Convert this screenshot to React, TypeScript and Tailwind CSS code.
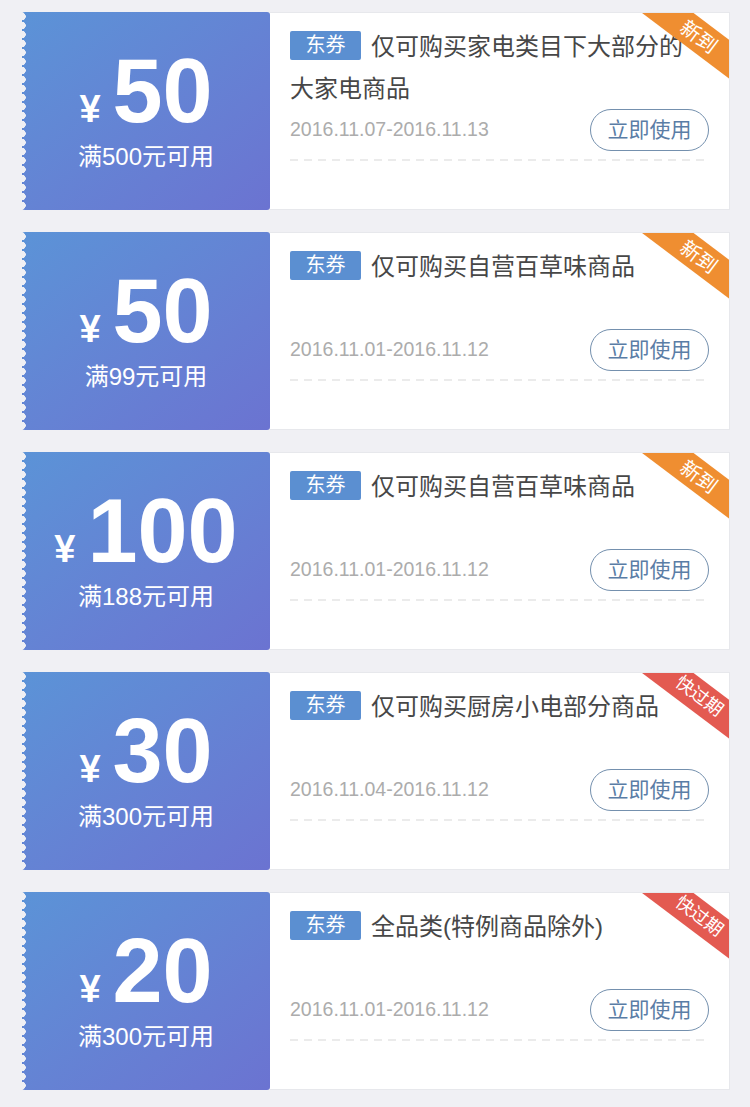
import React from "react"

type Coupon = {
  amount: string
  limit: string
  title: string
  date: string
  badge: "new" | "expiring"
}

const coupons: Coupon[] = [
  { amount: "50", limit: "满500元可用", title: "仅可购买家电类目下大部分的大家电商品", date: "2016.11.07-2016.11.13", badge: "new" },
  { amount: "50", limit: "满99元可用", title: "仅可购买自营百草味商品", date: "2016.11.01-2016.11.12", badge: "new" },
  { amount: "100", limit: "满188元可用", title: "仅可购买自营百草味商品", date: "2016.11.01-2016.11.12", badge: "new" },
  { amount: "30", limit: "满300元可用", title: "仅可购买厨房小电部分商品", date: "2016.11.04-2016.11.12", badge: "expiring" },
  { amount: "20", limit: "满300元可用", title: "全品类(特例商品除外)", date: "2016.11.01-2016.11.12", badge: "expiring" },
]

function CouponCard({ coupon }: { coupon: Coupon }) {
  const isNew = coupon.badge === "new"

  return (
    <div className="flex h-[198px] w-full">
      {/* left: amount */}
      <div className="relative flex w-[248px] shrink-0 flex-col items-center justify-center rounded-[3px] bg-gradient-to-br from-[#5b93d7] to-[#6b73d1] pb-[4px] text-white">
        <div className="absolute left-0 top-0 h-full w-[4px] bg-[radial-gradient(circle_at_0_50%,#f0f0f4_3.5px,transparent_4px)] bg-[length:4px_9px]" />
        <div className="flex items-baseline">
          <span className="mr-[12px] text-[38px] font-bold leading-none">¥</span>
          <span className="text-[90px] font-bold leading-none">{coupon.amount}</span>
        </div>
        <div className="mt-[6px] text-[24px] leading-[30px]">{coupon.limit}</div>
      </div>

      {/* right: details */}
      <div className="relative flex-1 overflow-hidden border border-l-0 border-[#e7e8ec] bg-white pl-[20px] pr-[20px] pt-[13px]">
        <div className={`absolute right-[-45px] top-[8px] flex h-[31px] w-[150px] rotate-[37deg] items-center justify-center text-white ${isNew ? "bg-[#ef8e31]" : "bg-[#e35a51]"}`}>
          <span className={isNew ? "text-[20px]" : "text-[18px]"}>{isNew ? "新到" : "快过期"}</span>
        </div>

        <div className="h-[84px] pr-[24px] text-[24px] leading-[42px] text-[#474747]">
          <span className="relative top-[-3px] mr-[10px] inline-block h-[29px] w-[71px] rounded-[2px] bg-[#5b8fd1] text-center align-middle text-[20px] leading-[29px] text-white">
            东券
          </span>
          {coupon.title}
        </div>

        <div className="mt-[-1px] flex h-[42px] items-center justify-between">
          <span className="text-[19.5px] text-[#acacac]">{coupon.date}</span>
          <button className="flex h-[42px] w-[119px] items-center justify-center rounded-full border-[1.5px] border-[#7490ae] text-[21px] text-[#5a7da6]">
            立即使用
          </button>
        </div>

        <div className="mt-[8px] h-[2px] w-full bg-[linear-gradient(to_right,#ebebeb_60%,transparent_0)] bg-[length:14px_2px]" />
      </div>
    </div>
  )
}

function App() {
  return (
    <div className="min-h-screen bg-[#f0f0f4] pb-[17px] pl-[22px] pr-[20px] pt-[12px] font-['Liberation_Sans','Noto_Sans_CJK_SC',sans-serif]">
      <div className="flex flex-col gap-[22px]">
        {coupons.map((c, i) => (
          <CouponCard key={i} coupon={c} />
        ))}
      </div>
    </div>
  )
}

export default App
